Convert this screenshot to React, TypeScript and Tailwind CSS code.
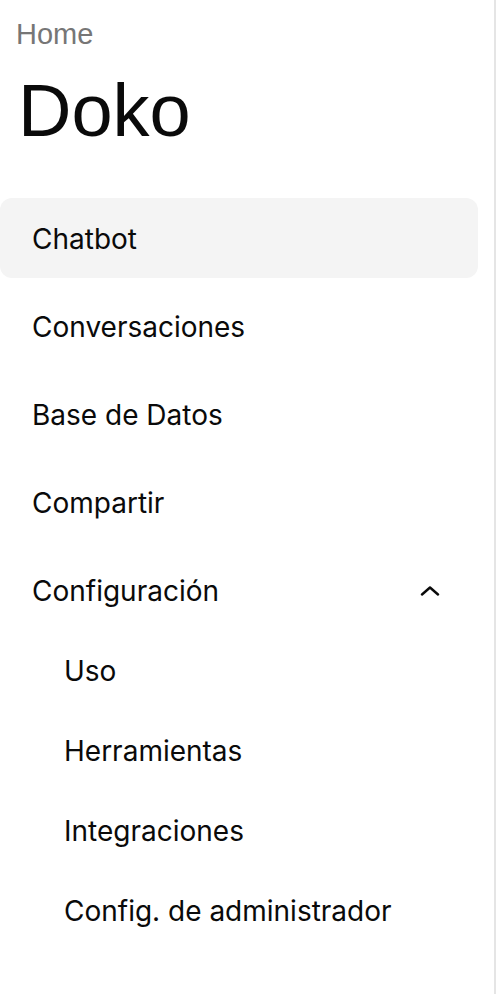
import { useState } from "react";

const MAIN = ["Chatbot", "Conversaciones", "Base de Datos", "Compartir"];
const SUB = ["Uso", "Herramientas", "Integraciones", "Config. de administrador"];

const ChevronUp = () => (
	<svg
		xmlns="http://www.w3.org/2000/svg"
		viewBox="0 0 20 10"
		fill="none"
		stroke="currentColor"
		strokeWidth="2.4"
		strokeLinecap="round"
		strokeLinejoin="round"
		className="w-[20px] h-[10px]"
	>
		<path d="M2 8.5 10 1.5 18 8.5" />
	</svg>
);

const App = () => {
	const [active] = useState("Chatbot");

	return (
		<div className="w-[500px] h-[994px] bg-white">
			<aside className="w-[496px] h-full border-r-2 border-[#e5e5e5] bg-white">
				<div className="px-4 pt-[18px] font-['Liberation_Sans',Arial,sans-serif]">
					<div className="text-[29px] leading-[32px] text-[#767676]">Home</div>
					<h1 className="mt-[21px] ml-[2px] text-[74px] leading-[80px] text-[#0a0a0a]">
						Doko
					</h1>
				</div>

				<nav className="mt-[47px] pr-4 flex flex-col gap-2 font-['Inter',sans-serif] text-[#0a0a0a]">
					{MAIN.map((item) => (
						<a
							key={item}
							className={`h-[80px] flex items-center px-8 pt-[1px] text-[28px] rounded-[12px] ${
								active === item ? "bg-[#f4f4f4]" : ""
							}`}
						>
							{item}
						</a>
					))}

					<div className="flex flex-col">
						<button className="h-[80px] flex items-center justify-between pl-8 pr-[38px] pt-[1px] text-[28px] text-left">
							<span>Configuración</span>
							<ChevronUp />
						</button>
						{SUB.map((item) => (
							<a
								key={item}
								className="h-[80px] flex items-center pl-16 pt-[1px] text-[28px]"
							>
								{item}
							</a>
						))}
					</div>
				</nav>
			</aside>
		</div>
	);
};

export default App;
